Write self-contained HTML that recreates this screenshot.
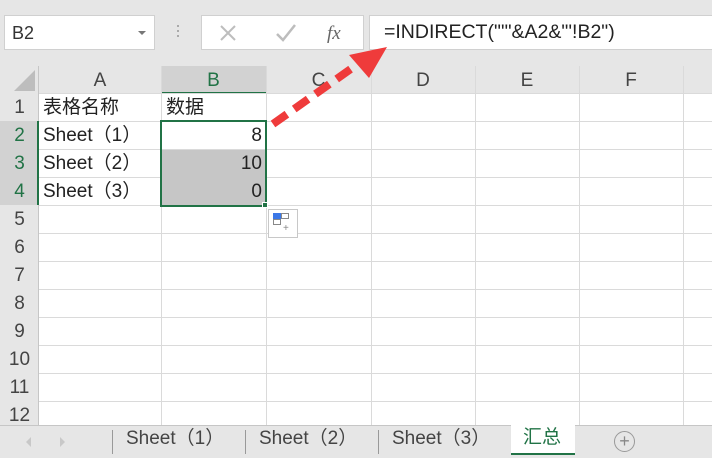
<!DOCTYPE html>
<html><head><meta charset="utf-8"><style>
*{margin:0;padding:0;box-sizing:border-box}
body{width:712px;height:458px;overflow:hidden;background:#fff;position:relative;font-family:"Liberation Sans","Noto Sans CJK SC",sans-serif}
.a{position:absolute}
.t{font-size:19px;color:#222;line-height:28px;white-space:nowrap}
</style></head><body>
<div class="a" style="left:0;top:0;width:712px;height:66px;background:#e6e6e6"></div>
<div class="a" style="left:4px;top:15px;width:151px;height:35px;background:#fff;border:1px solid #d0d0d0"></div>
<div class="a t" style="left:12px;top:19px;font-size:18px;color:#333">B2</div>
<div class="a" style="left:138px;top:31px;border-left:4px solid transparent;border-right:4px solid transparent;border-top:4px solid #777"></div>
<div class="a" style="left:177px;top:25px;width:2px;height:2px;background:#aaa;box-shadow:0 5px #aaa,0 10px #aaa"></div>
<div class="a" style="left:201px;top:15px;width:163px;height:35px;background:#fff;border:1px solid #d0d0d0"></div>
<svg class="a" style="left:215px;top:20px" width="150" height="26"><path d="M6 6 L20 20 M20 6 L6 20" stroke="#bdbdbd" stroke-width="2"/><path d="M62 14 L68 20 L80 5" stroke="#bdbdbd" stroke-width="2.5" fill="none"/><text x="112" y="19" font-family="Liberation Serif" font-style="italic" font-size="19" fill="#666">fx</text></svg>
<div class="a" style="left:369px;top:15px;width:343px;height:35px;background:#fff;border:1px solid #d0d0d0;border-right:none"></div>
<div class="a t" style="left:384px;top:18px;font-size:19.5px;color:#222">=INDIRECT("'"&amp;A2&amp;"'!B2")</div>
<div class="a" style="left:0;top:66px;width:712px;height:28px;background:#e6e6e6;border-bottom:1px solid #c6c6c6"></div>
<div class="a" style="left:0;top:66px;width:39px;height:360px;background:#e6e6e6;border-right:1px solid #c6c6c6"></div>
<svg class="a" style="left:14px;top:70px" width="22" height="22"><path d="M21 0 L21 21 L0 21Z" fill="#bdbdbd"/></svg>
<div class="a" style="left:161px;top:66px;width:105px;height:28px;background:#d2d2d2;border-bottom:2px solid #217346"></div>
<div class="a" style="left:0;top:121px;width:39px;height:84px;background:#d2d2d2;border-right:2px solid #217346"></div>
<div class="a" style="left:39px;top:66px;width:673px;height:360px;background:repeating-linear-gradient(to bottom,transparent 0,transparent 27px,#dadada 27px,#dadada 28px)"></div>
<div class="a" style="left:161px;top:66px;width:1px;height:360px;background:#dadada"></div>
<div class="a" style="left:266px;top:66px;width:1px;height:360px;background:#dadada"></div>
<div class="a" style="left:371px;top:66px;width:1px;height:360px;background:#dadada"></div>
<div class="a" style="left:475px;top:66px;width:1px;height:360px;background:#dadada"></div>
<div class="a" style="left:579px;top:66px;width:1px;height:360px;background:#dadada"></div>
<div class="a" style="left:683px;top:66px;width:1px;height:360px;background:#dadada"></div>
<div class="a t" style="left:39px;top:67px;width:122px;text-align:center;color:#444">A</div>
<div class="a t" style="left:161px;top:67px;width:105px;text-align:center;color:#217346">B</div>
<div class="a t" style="left:266px;top:67px;width:105px;text-align:center;color:#444">C</div>
<div class="a t" style="left:371px;top:67px;width:104px;text-align:center;color:#444">D</div>
<div class="a t" style="left:475px;top:67px;width:104px;text-align:center;color:#444">E</div>
<div class="a t" style="left:579px;top:67px;width:104px;text-align:center;color:#444">F</div>
<div class="a t" style="left:0;top:94px;width:39px;text-align:center;color:#444;line-height:28px">1<br><span style="color:#217346">2<br>3<br>4</span><br>5<br>6<br>7<br>8<br>9<br>10<br>11<br>12</div>
<div class="a" style="left:162px;top:150px;width:103px;height:55px;background:#c6c6c6"></div>
<div class="a" style="left:160px;top:120px;width:107px;height:87px;border:2px solid #217346"></div>
<div class="a" style="left:262px;top:202px;width:6px;height:6px;background:#217346;border:1px solid #fff"></div>
<div class="a t" style="left:43px;top:94px">表格名称</div>
<div class="a t" style="left:166px;top:94px">数据</div>
<div class="a t" style="left:43px;top:122px">Sheet（1）</div>
<div class="a t" style="left:43px;top:150px">Sheet（2）</div>
<div class="a t" style="left:43px;top:178px">Sheet（3）</div>
<div class="a t" style="left:166px;top:122px;width:96px;text-align:right">8</div>
<div class="a t" style="left:166px;top:150px;width:96px;text-align:right">10</div>
<div class="a t" style="left:166px;top:178px;width:96px;text-align:right">0</div>
<div class="a" style="left:268px;top:209px;width:30px;height:29px;background:#fff;border:1px solid #c8c8c8"></div>
<div class="a" style="left:273px;top:213px;width:8px;height:6px;background:#3b78e7"></div>
<div class="a" style="left:281px;top:213px;width:8px;height:6px;border:1px solid #888"></div>
<div class="a" style="left:273px;top:219px;width:8px;height:6px;border:1px solid #888"></div>
<div class="a" style="left:283px;top:224px;font-size:10px;color:#888;line-height:10px">+</div>
<svg class="a" style="left:0;top:0" width="712" height="458"><line x1="273" y1="124" x2="355" y2="66" stroke="#ef3b3b" stroke-width="8" stroke-dasharray="17 9"/><path d="M387 47 L349 55 L369 78Z" fill="#ef3b3b"/></svg>
<div class="a" style="left:0;top:425px;width:712px;height:33px;background:#e6e6e6;border-top:1px solid #c6c6c6"></div>
<div class="a" style="left:26px;top:437px;border-right:5px solid #c8c8c8;border-top:5px solid transparent;border-bottom:5px solid transparent"></div>
<div class="a" style="left:60px;top:437px;border-left:5px solid #c8c8c8;border-top:5px solid transparent;border-bottom:5px solid transparent"></div>
<div class="a" style="left:112px;top:430px;width:1px;height:24px;background:#999"></div>
<div class="a" style="left:245px;top:430px;width:1px;height:24px;background:#999"></div>
<div class="a" style="left:378px;top:430px;width:1px;height:24px;background:#999"></div>
<div class="a t" style="left:126px;top:425px;color:#444">Sheet（1）</div>
<div class="a t" style="left:259px;top:425px;color:#444">Sheet（2）</div>
<div class="a t" style="left:392px;top:425px;color:#444">Sheet（3）</div>
<div class="a" style="left:511px;top:425px;width:64px;height:30px;background:#fff;border-bottom:2px solid #217346"></div>
<div class="a t" style="left:523px;top:424px;color:#217346">汇总</div>
<div class="a" style="left:614px;top:431px;width:21px;height:21px;border:1px solid #999;border-radius:50%;text-align:center;line-height:18px;font-size:18px;color:#888">+</div>
</body></html>
